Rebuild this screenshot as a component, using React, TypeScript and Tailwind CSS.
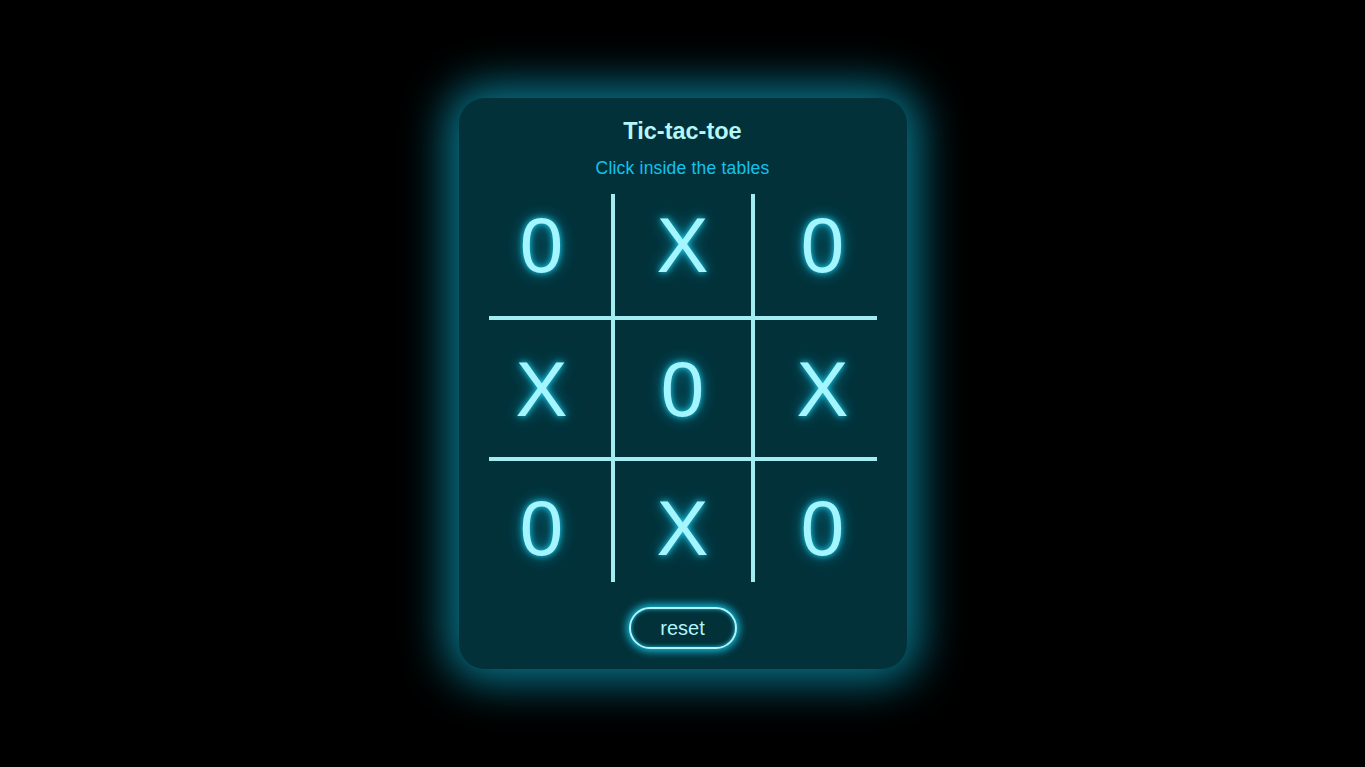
import { useState } from "react";

type Mark = "X" | "0" | "";

const initial: Mark[] = ["0", "X", "0", "X", "0", "X", "0", "X", "0"];

// border + padding per cell so the marks sit where the reference has them
const cellClass = [
  "pr-4 pb-5",
  "border-x-4 pb-5",
  "pl-[14px] pb-5",
  "border-y-4 pr-4",
  "border-4",
  "border-y-4 pl-[14px]",
  "pr-4 pt-3",
  "border-x-4 pt-3",
  "pl-[14px] pt-3",
];

export default function App() {
  const [cells, setCells] = useState<Mark[]>(initial);
  const [turn, setTurn] = useState<"X" | "0">("X");

  const play = (i: number) => {
    if (cells[i]) return;
    const next = [...cells];
    next[i] = turn;
    setCells(next);
    setTurn(turn === "X" ? "0" : "X");
  };

  const reset = () => {
    setCells(Array(9).fill(""));
    setTurn("X");
  };

  return (
    <div
      className="flex min-h-screen items-center justify-center bg-black"
      style={{ fontFamily: '"Liberation Sans", Arial, sans-serif' }}
    >
      <div className="flex h-[571px] w-[448px] flex-col items-center rounded-[26px] bg-[#023139] px-[30px] pt-[19px] shadow-[0_0_45px_12px_rgba(8,128,152,0.95)]">
        <h1 className="text-[23.5px] font-bold leading-[28px] text-[#b4f6fa]">
          Tic-tac-toe
        </h1>
        <p className="mt-[12px] text-[17.5px] leading-[22px] tracking-[0.2px] text-[#12c2ee]">
          Click inside the tables
        </p>
        <div className="mt-[15px] grid grid-cols-[122px_144px_122px] grid-rows-[122px_145px_121px]">
          {cells.map((c, i) => (
            <button
              key={i}
              type="button"
              onClick={() => play(i)}
              className={`flex items-center justify-center border-[#a3ecf1] text-[78px] leading-none text-[#a3f5ff] [text-shadow:0_0_6px_#22d3ee,0_0_16px_#0891b2] ${cellClass[i]}`}
            >
              {c}
            </button>
          ))}
        </div>
        <button
          type="button"
          onClick={reset}
          className="mt-[25px] h-[42px] w-[108px] rounded-full border-2 border-[#b0f4fa] bg-[#023139] text-[20px] text-[#b0f4fa] shadow-[0_0_8px_2px_#17c6e8,inset_0_0_4px_#17c6e8]"
        >
          reset
        </button>
      </div>
    </div>
  );
}
